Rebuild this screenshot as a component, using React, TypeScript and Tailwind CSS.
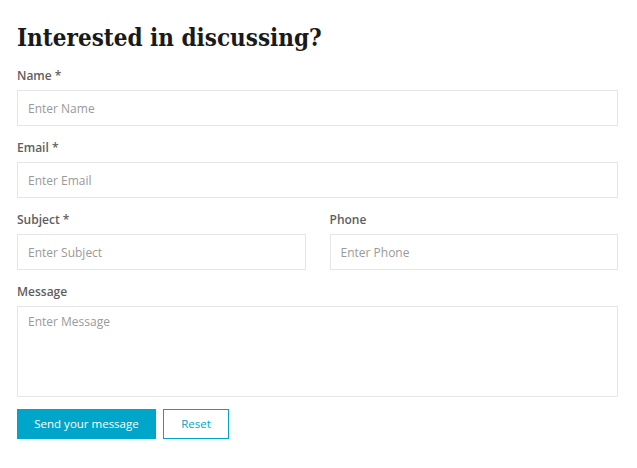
export default function App() {
  const input =
    "block w-full h-[36px] border border-[#e6e6e6] bg-white px-[10px] text-[12px] text-[#555] placeholder:text-[#9a9a9a] outline-none";
  const label = "block mb-[6px] text-[12px] font-semibold leading-[16px] text-[#5e5e5e]";

  return (
    <div className="min-h-screen bg-white font-['Open_Sans',sans-serif]">
      <form className="pl-[17px] pr-[19px] pt-[20px]" onSubmit={(e) => e.preventDefault()}>
        <h2 className="mb-[12px] text-[24px] font-bold leading-[36px] text-[#1a1a1a] font-['DejaVu_Serif_Condensed','DejaVu_Serif',serif]">
          Interested in discussing?
        </h2>

        <div className="flex flex-col gap-[14px]">
          <div>
            <label className={label}>Name *</label>
            <input className={input} placeholder="Enter Name" />
          </div>

          <div>
            <label className={label}>Email *</label>
            <input className={input} placeholder="Enter Email" />
          </div>

          <div className="grid grid-cols-2 gap-[24px]">
            <div>
              <label className={label}>Subject *</label>
              <input className={input} placeholder="Enter Subject" />
            </div>
            <div>
              <label className={label}>Phone</label>
              <input className={input} placeholder="Enter Phone" />
            </div>
          </div>

          <div>
            <label className={label}>Message</label>
            <textarea
              className="block w-full h-[91px] resize-none border border-[#e6e6e6] bg-white px-[10px] py-[6px] text-[12px] text-[#555] placeholder:text-[#9a9a9a] outline-none"
              placeholder="Enter Message"
            />
          </div>
        </div>

        <div className="mt-[12px] flex gap-[7px]">
          <button
            type="submit"
            className="h-[30px] w-[139px] bg-[#00a6c9] text-[11.5px] text-white"
          >
            Send your message
          </button>
          <button
            type="reset"
            className="h-[30px] w-[66px] border border-[#00a6c9] bg-white text-[11.5px] text-[#00a6c9]"
          >
            Reset
          </button>
        </div>
      </form>
    </div>
  );
}
